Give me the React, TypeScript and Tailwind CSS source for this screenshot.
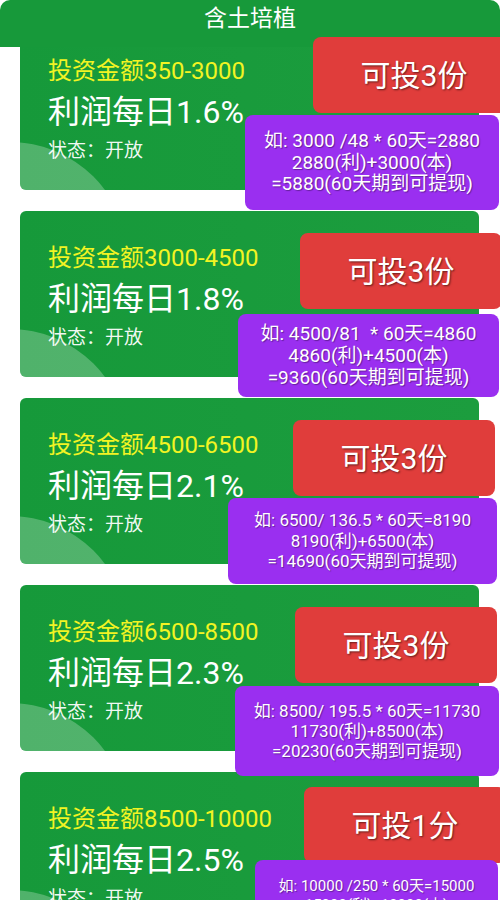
import React from 'react';

interface Plan {
  range: string;
  rate: string;
  quota: string;
  redPos: string;
  purplePos: string;
  noteText: string;
  lines: string[];
}

const plans: Plan[] = [
  {
    range: '350-3000',
    rate: '1.6%',
    quota: '可投3份',
    redPos: 'left-[293px] top-[13px]',
    purplePos: 'left-[225px] top-[91px] w-[254px] h-[95px]',
    noteText: 'text-[19px] leading-[21.5px]',
    lines: ['如: 3000 /48 * 60天=2880', '2880(利)+3000(本)', '=5880(60天期到可提现)'],
  },
  {
    range: '3000-4500',
    rate: '1.8%',
    quota: '可投3份',
    redPos: 'left-[280px] top-[22px]',
    purplePos: 'left-[218px] top-[103px] w-[261px] h-[83px]',
    noteText: 'text-[19px] leading-[22px]',
    lines: ['如: 4500/81  * 60天=4860', '4860(利)+4500(本)', '=9360(60天期到可提现)'],
  },
  {
    range: '4500-6500',
    rate: '2.1%',
    quota: '可投3份',
    redPos: 'left-[273px] top-[22px]',
    purplePos: 'left-[208px] top-[100px] w-[269px] h-[86px]',
    noteText: 'text-[17px] leading-[20.5px]',
    lines: ['如: 6500/ 136.5 * 60天=8190', '8190(利)+6500(本)', '=14690(60天期到可提现)'],
  },
  {
    range: '6500-8500',
    rate: '2.3%',
    quota: '可投3份',
    redPos: 'left-[275px] top-[22px]',
    purplePos: 'left-[215px] top-[101px] w-[264px] h-[90px]',
    noteText: 'text-[17px] leading-[20px]',
    lines: ['如: 8500/ 195.5 * 60天=11730', '11730(利)+8500(本)', '=20230(60天期到可提现)'],
  },
  {
    range: '8500-10000',
    rate: '2.5%',
    quota: '可投1分',
    redPos: 'left-[284px] top-[15px]',
    purplePos: 'left-[235px] top-[88px] w-[243px] h-[90px]',
    noteText: 'text-[15px] leading-[19px]',
    lines: ['如: 10000 /250 * 60天=15000', '15000(利)+10000(本)', '=25000(60天期到可提现)'],
  },
];

function PlanCard({ plan }: { plan: Plan }) {
  return (
    <div className="relative mx-[20px] h-[166px] w-[459px] shrink-0">
      {/* card body with the pale circle in the corner */}
      <div className="absolute inset-0 overflow-hidden rounded-[6px] bg-gradient-to-r from-[#16993a] to-[#1c9d3e]">
        <div className="absolute left-[-128px] top-[118px] h-[236px] w-[236px] rounded-full bg-white/25" />
      </div>

      <div className="relative flex flex-col gap-2 pl-[28px] pt-[33px]">
        <div className="text-[24px] leading-[28px] text-[#f2f423] whitespace-nowrap">
          投资金额{plan.range}
        </div>
        <div className="text-[32px] leading-[38px] text-white whitespace-nowrap">
          利润每日{plan.rate}
        </div>
        <div className="text-[19px] leading-[24px] text-white/95 whitespace-nowrap">状态：开放</div>
      </div>

      <div
        className={`absolute z-20 flex h-[76px] w-[202px] items-center justify-center rounded-[8px] bg-[#e03d3b] ${plan.redPos}`}
      >
        <span className="text-[30px] text-white [text-shadow:1px_1px_2px_rgba(0,0,0,0.55)]">
          {plan.quota}
        </span>
      </div>

      <div
        className={`absolute z-20 flex flex-col items-center justify-center rounded-[8px] bg-[#9a2ff0] text-white [text-shadow:1px_1px_1px_rgba(0,0,0,0.35)] ${plan.purplePos} ${plan.noteText}`}
      >
        {plan.lines.map((line, i) => (
          <div key={i} className="whitespace-pre">
            {line}
          </div>
        ))}
      </div>
    </div>
  );
}

export default function App() {
  return (
    <div className="relative h-[900px] w-[500px] overflow-hidden bg-white font-['Roboto','Noto_Sans_CJK_SC',sans-serif]">
      <div className="relative z-10 h-[47px] rounded-t-[10px] bg-[#17993a] text-center text-[23px] leading-[38px] text-white">
        含土培植
      </div>

      <div className="-mt-[23px] flex flex-col gap-[21px]">
        {plans.map((plan) => (
          <PlanCard key={plan.range} plan={plan} />
        ))}
      </div>
    </div>
  );
}
